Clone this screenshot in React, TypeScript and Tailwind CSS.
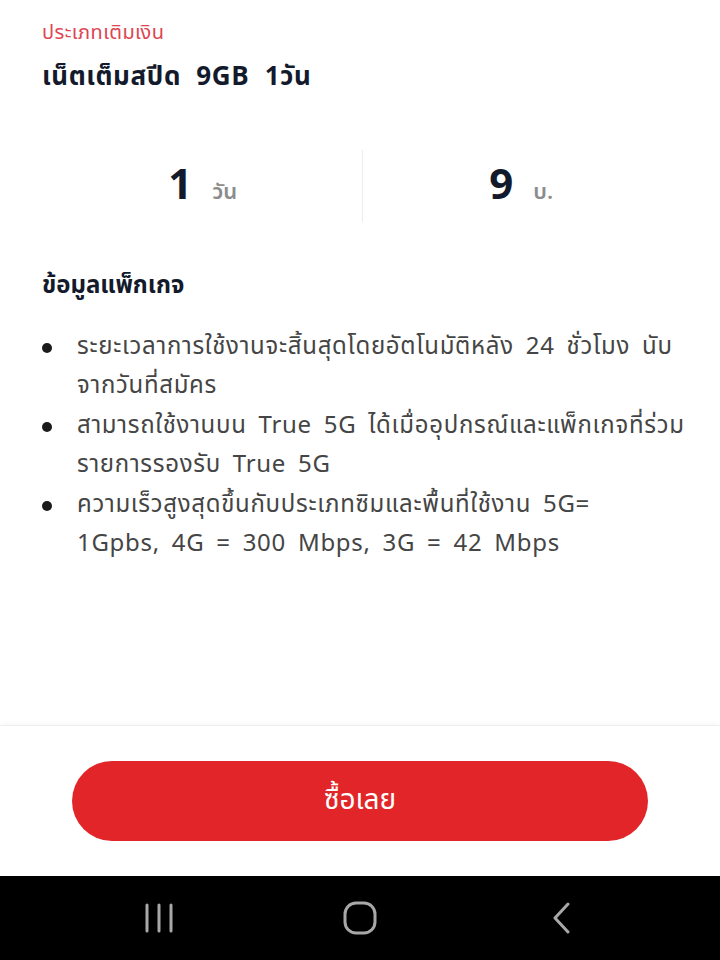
const bullets = [
  ['ระยะเวลาการใช้งานจะสิ้นสุดโดยอัตโนมัติหลัง 24 ชั่วโมง นับ', 'จากวันที่สมัคร'],
  ['สามารถใช้งานบน True 5G ได้เมื่ออุปกรณ์และแพ็กเกจที่ร่วม', 'รายการรองรับ True 5G'],
  ['ความเร็วสูงสุดขึ้นกับประเภทซิมและพื้นที่ใช้งาน 5G=', '1Gpbs, 4G = 300 Mbps, 3G = 42 Mbps'],
];

function Stat({ value, unit, className }: { value: string; unit: string; className: string }) {
  return (
    <div className={`flex flex-1 items-baseline justify-center gap-5 ${className}`}>
      <span className="text-[42px] font-bold leading-none text-[#131a2c]">{value}</span>
      <span className="text-[22px] font-semibold leading-none text-[#8c8c8c]">{unit}</span>
    </div>
  );
}

export default function App() {
  return (
    <div
      className="flex h-[960px] w-[720px] flex-col bg-white"
      style={{ fontFamily: '"Noto Sans Thai", "Noto Sans", "DejaVu Sans", sans-serif' }}
    >
      <div className="flex-1 px-[42px] pt-[20px]">
        <div className="text-[20px] leading-[26px] tracking-[0.4px] text-[#de4552]">ประเภทเติมเงิน</div>
        <h1 className="mt-[14px] text-[26px] font-bold leading-[34px] tracking-[0.6px] text-[#131a2c] [word-spacing:8px]">
          เน็ตเต็มสปีด 9GB 1วัน
        </h1>

        <div className="-mx-[42px] mt-[56px] flex h-[72px] items-center">
          <Stat value="1" unit="วัน" className="pl-[44px]" />
          <div className="h-full w-px bg-[#ececec]" />
          <Stat value="9" unit="บ." className="pr-[40px]" />
        </div>

        <h2 className="mt-[48px] text-[24px] font-bold leading-[32px] text-[#131a2c]">ข้อมูลแพ็กเกจ</h2>

        <ul className="mt-[26px] flex flex-col gap-px">
          {bullets.map((b) => (
            <li key={b[0]} className="flex text-[24px] leading-[39px] tracking-[0.7px] text-[#454545] [word-spacing:5px]">
              <span className="flex h-[39px] w-[35px] shrink-0 items-center">
                <span className="h-[10px] w-[10px] rounded-full bg-[#1b1b1b]" />
              </span>
              <span className="flex flex-col whitespace-nowrap">
                <span>{b[0]}</span>
                <span>{b[1]}</span>
              </span>
            </li>
          ))}
        </ul>
      </div>

      <div className="flex h-[151px] items-center border-t border-[#f0f0f0] bg-white px-[72px] shadow-[0_-2px_4px_rgba(0,0,0,0.03)]">
        <button className="h-[80px] w-full rounded-full bg-[#e12528] text-[28px] font-normal text-white">
          ซื้อเลย
        </button>
      </div>

      <div className="flex h-[84px] items-center bg-black">
        <div className="mx-auto grid w-[603px] grid-cols-3 place-items-center">
          <svg width="30" height="30" viewBox="0 0 30 30" fill="none" stroke="#a8a8a8" strokeWidth="3" strokeLinecap="round">
            <path d="M3 2v26M15 2v26M27 2v26" />
          </svg>
          <svg width="34" height="34" viewBox="0 0 34 34" fill="none" stroke="#a8a8a8" strokeWidth="3">
            <rect x="2" y="2" width="30" height="30" rx="11" />
          </svg>
          <svg width="20" height="32" viewBox="0 0 20 32" fill="none" stroke="#a8a8a8" strokeWidth="3" strokeLinecap="round" strokeLinejoin="round">
            <path d="M17 2 4 16l13 14" />
          </svg>
        </div>
      </div>
    </div>
  );
}
